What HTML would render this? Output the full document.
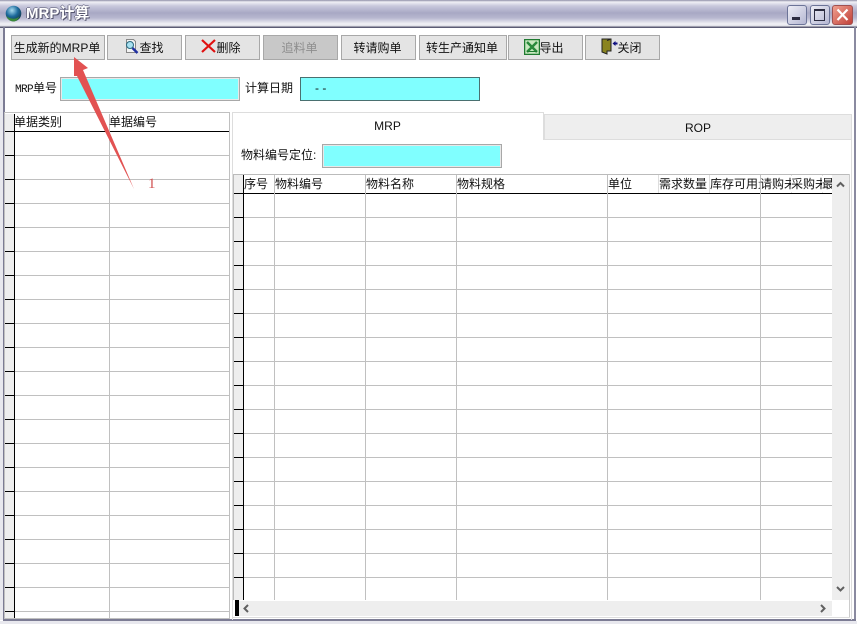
<!DOCTYPE html>
<html><head><meta charset="utf-8">
<style>
html,body{margin:0;padding:0;background:#fff;}
#w{position:relative;width:857px;height:624px;overflow:hidden;background:#fff;font:12px "Liberation Sans","WenQuanYi Zen Hei","Noto Sans CJK SC",sans-serif;color:#111;}
#w div,#w span.a{position:absolute;white-space:nowrap;}
.btn{top:35px;height:23px;border:1px solid #a8a8a8;background:#e4e4e4;line-height:24px;text-align:center;box-sizing:content-box;text-indent:-2px;}
.cy{background:#80ffff;border:1px solid #a8a8a8;box-shadow:inset 0 0 0 1px #e8e8e8;box-sizing:border-box;}
.t{line-height:16px;}
</style></head><body>
<div id="w">
<div style="left:0;top:0;width:857px;height:28px;background:linear-gradient(#8f8fa8 0,#f0f0f5 2px,#c8c8dc 6px,#a8a8c4 13px,#b8b8d0 18px,#f2f2f6 24px,#e0e0e6 26px,#5c5c74 27px,#5c5c74 28px);"></div>
<svg style="position:absolute;left:5px;top:5px" width="17" height="17" viewBox="0 0 17 17"><defs><radialGradient id="g" cx="40%" cy="30%" r="70%"><stop offset="0" stop-color="#a8dcf0"/><stop offset=".55" stop-color="#1c6a9c"/><stop offset="1" stop-color="#123c50"/></radialGradient></defs><circle cx="8.5" cy="8.5" r="7.8" fill="url(#g)"/><path d="M1.5 11c3 3 9 4 13 .5-2 4-4 5-6 5-3 0-6-2-7-5.500z" fill="#3c8a3c"/></svg>
<div style="left:26px;top:5px;font-size:15px;line-height:18px;font-weight:bold;color:#fff;text-shadow:1px 1px 0 #55556e,-1px 0 0 #77778e,0 -1px 0 #8888a0;">MRP计算</div>

<div style="left:787px;top:5px;width:18px;height:18px;border:1px solid #6c7498;border-radius:3px;background:linear-gradient(135deg,#eeeef6,#b4b6d2);"></div>
<div style="left:792px;top:17px;width:8px;height:3px;background:#2c2c40;"></div>
<div style="left:810px;top:5px;width:18px;height:18px;border:1px solid #6c7498;border-radius:3px;background:linear-gradient(135deg,#eeeef6,#b4b6d2);"></div>
<div style="left:814px;top:9px;width:9px;height:9px;border:1px solid #2c2c40;border-top-width:2px;"></div>
<div style="left:832px;top:5px;width:19px;height:18px;border:1px solid #a05050;border-radius:3px;background:linear-gradient(135deg,#f0a090,#c04038);"></div>
<svg style="position:absolute;left:833px;top:6px" width="19" height="18"><path d="M4.500 3.500L14.500 14M14.500 3.500L4.500 14" stroke="#fff" stroke-width="2.200" fill="none"/></svg>

<div style="left:0;top:28px;width:3px;height:592px;background:#e8e8ee;"></div>
<div style="left:3px;top:27px;width:2px;height:594px;background:#7c7c94;"></div>
<div style="left:854px;top:27px;width:2px;height:594px;background:#8a8aa0;"></div>
<div style="left:3px;top:619px;width:853px;height:2px;background:#7c7c94;"></div>
<div style="left:0;top:621px;width:857px;height:3px;background:#e8e8ee;"></div>

<div class="btn" style="left:11px;width:92px;">生成新的MRP单</div>
<div class="btn" style="left:107px;width:73px;padding-left:0;"><span style="padding-left:16px;">查找</span></div>
<svg style="position:absolute;left:124px;top:38px" width="16" height="18"><path d="M2.500 1.500h7l2 2v11h-9z" fill="#f4f4f4" stroke="#888"/><circle cx="6" cy="7" r="3.500" fill="#a8e0f0" stroke="#2a6a80"/><path d="M8.500 10l5 5" stroke="#2030a0" stroke-width="2.500"/></svg>
<div class="btn" style="left:185px;width:73px;"><span style="padding-left:14px;">删除</span></div>
<svg style="position:absolute;left:201px;top:39px" width="15" height="15"><path d="M1 1L14 13M14 1L1 13" stroke="#e01010" stroke-width="2.200" fill="none"/></svg>
<div class="btn" style="left:263px;width:73px;background:#c8c8c8;color:#8e8e8e;">追料单</div>
<div class="btn" style="left:341px;width:73px;">转请购单</div>
<div class="btn" style="left:419px;width:86px;">转生产通知单</div>
<div class="btn" style="left:508px;width:73px;"><span style="padding-left:14px;">导出</span></div>
<svg style="position:absolute;left:524px;top:39px" width="16" height="16"><rect x=".5" y=".5" width="15" height="15" fill="#c8e8c0" stroke="#1e7a30" stroke-width="1.500"/><path d="M3 3L13 13M13 3L3 13" stroke="#2a8a3c" stroke-width="2.500"/><path d="M3 12.500h10" stroke="#1e7a30"/></svg>
<div class="btn" style="left:585px;width:73px;"><span style="padding-left:16px;">关闭</span></div>
<svg style="position:absolute;left:601px;top:38px" width="17" height="17"><path d="M1 1h9v12H6v3L1 14z" fill="#8a8420" stroke="#222"/><path d="M6 2.500l3-1" stroke="#222"/><path d="M11.500 5.500l3-2.500v1.500h2v2h-2v1.500z" fill="#101080"/></svg>

<div class="t" style="left:15px;top:80px;"><span style="font:11px 'Liberation Mono',monospace;letter-spacing:-.6px;">MRP</span>单号</div>
<div class="cy" style="left:60px;top:77px;width:180px;height:24px;"></div>
<div class="t" style="left:245px;top:80px;">计算日期</div>
<div style="left:300px;top:77px;width:180px;height:24px;box-sizing:border-box;background:#80ffff;border:1px solid #4a7070;"></div>
<div class="t" style="left:315px;top:80px;">- -</div>

<!-- left grid -->
<div style="left:4px;top:112px;width:226px;height:507px;border:1px solid #c0c0c0;box-sizing:border-box;overflow:hidden;">
  <div style="left:1px;top:19px;width:223px;height:486px;background:repeating-linear-gradient(#fff 0,#fff 23px,#c0c0c0 23px,#c0c0c0 24px);"></div>
  <div style="left:0;top:1px;width:9px;height:504px;background:#eee;"></div>
  <div style="left:0;top:19px;width:9px;height:486px;background:repeating-linear-gradient(transparent 0,transparent 23px,#000 23px,#000 24px);"></div>
  <div style="left:9px;top:1px;width:1px;height:504px;background:#000;"></div>
  <div style="left:0;top:18px;width:224px;height:1px;background:#000;"></div>
  <div style="left:104px;top:1px;width:1px;height:504px;background:#c0c0c0;"></div>
  <div class="t" style="left:9px;top:1px;">单据类别</div>
  <div class="t" style="left:104px;top:1px;">单据编号</div>
</div>

<!-- tabs -->
<div style="left:232px;top:112px;width:312px;height:1px;background:#ddd;"></div>
<div style="left:232px;top:112px;width:1px;height:508px;background:#ddd;"></div>
<div style="left:543px;top:112px;width:1px;height:28px;background:#ddd;"></div>
<div style="left:544px;top:114px;width:308px;height:26px;box-sizing:border-box;background:#eee;border:1px solid #ddd;text-align:center;line-height:27px;">ROP</div>
<div style="left:232px;top:118px;width:311px;text-align:center;line-height:16px;">MRP</div>
<div style="left:851px;top:140px;width:1px;height:480px;background:#ddd;"></div>
<div class="t" style="left:241px;top:147px;">物料编号定位:</div>
<div class="cy" style="left:322px;top:144px;width:180px;height:24px;"></div>

<!-- right grid -->
<div style="left:233px;top:174px;width:617px;height:1px;background:#bbb;"></div>
<div style="left:233px;top:175px;width:1px;height:425px;background:#bbb;"></div>
<div style="left:849px;top:174px;width:1px;height:443px;background:#ccc;"></div>
<div style="left:234px;top:175px;width:10px;height:425px;background:#eee;"></div>
<div style="left:244px;top:194px;width:588px;height:406px;background:repeating-linear-gradient(#fff 0,#fff 23px,#c0c0c0 23px,#c0c0c0 24px);"></div>
<div style="left:234px;top:194px;width:10px;height:406px;background:repeating-linear-gradient(transparent 0,transparent 23px,#000 23px,#000 24px);"></div>
<div style="left:243px;top:175px;width:1px;height:425px;background:#000;"></div>
<div style="left:234px;top:193px;width:598px;height:1px;background:#000;"></div>
<div style="left:274px;top:175px;width:1px;height:425px;background:#c0c0c0;"></div>
<div style="left:365px;top:175px;width:1px;height:425px;background:#c0c0c0;"></div>
<div style="left:456px;top:175px;width:1px;height:425px;background:#c0c0c0;"></div>
<div style="left:607px;top:175px;width:1px;height:425px;background:#c0c0c0;"></div>
<div style="left:760px;top:175px;width:1px;height:425px;background:#c0c0c0;"></div>
<div style="left:658px;top:175px;width:1px;height:18px;background:#ddd;"></div>
<div style="left:709px;top:175px;width:1px;height:18px;background:#ddd;"></div>
<div style="left:791px;top:175px;width:1px;height:18px;background:#ddd;"></div>
<div style="left:822px;top:175px;width:1px;height:18px;background:#ddd;"></div>
<div class="t" style="left:244px;top:176px;">序号</div>
<div class="t" style="left:275px;top:176px;">物料编号</div>
<div class="t" style="left:366px;top:176px;">物料名称</div>
<div class="t" style="left:457px;top:176px;">物料规格</div>
<div class="t" style="left:608px;top:176px;">单位</div>
<div class="t" style="left:659px;top:176px;">需求数量</div>
<div class="t" style="left:710px;top:176px;width:50px;overflow:hidden;">库存可用量</div>
<div class="t" style="left:760px;top:176px;width:32px;overflow:hidden;">请购未</div>
<div class="t" style="left:791px;top:176px;width:32px;overflow:hidden;background:#fff;">采购未</div>
<div class="t" style="left:822px;top:176px;width:10px;overflow:hidden;background:#fff;">最</div>

<!-- scrollbars -->
<div style="left:832px;top:175px;width:17px;height:425px;background:#eee;"></div>
<svg style="position:absolute;left:832px;top:175px" width="17" height="425"><path d="M5 11.500l3.500-3.500 3.500 3.500" stroke="#606060" stroke-width="2" fill="none"/><path d="M5 412l3.500 3.500 3.500-3.500" stroke="#606060" stroke-width="2" fill="none"/></svg>
<div style="left:235px;top:600px;width:4px;height:16px;background:#000;"></div>
<div style="left:239px;top:601px;width:593px;height:15px;background:#eee;"></div>
<svg style="position:absolute;left:239px;top:601px" width="593" height="15"><path d="M9 4L5.500 7.500 9 11" stroke="#606060" stroke-width="2" fill="none"/><path d="M582 4l3.500 3.500L582 11" stroke="#606060" stroke-width="2" fill="none"/></svg>
<div style="left:233px;top:617px;width:617px;height:1px;background:#ddd;"></div>

<!-- annotation -->
<svg style="position:absolute;left:0;top:0" width="857" height="624"><polygon points="74,57 88,68 83,70 134,189 77,76 74,76" fill="#e25252"/></svg>
<div style="left:148px;top:176px;font:15px/16px 'Liberation Serif',serif;color:#d05050;">1</div>
</div>
</body></html>
